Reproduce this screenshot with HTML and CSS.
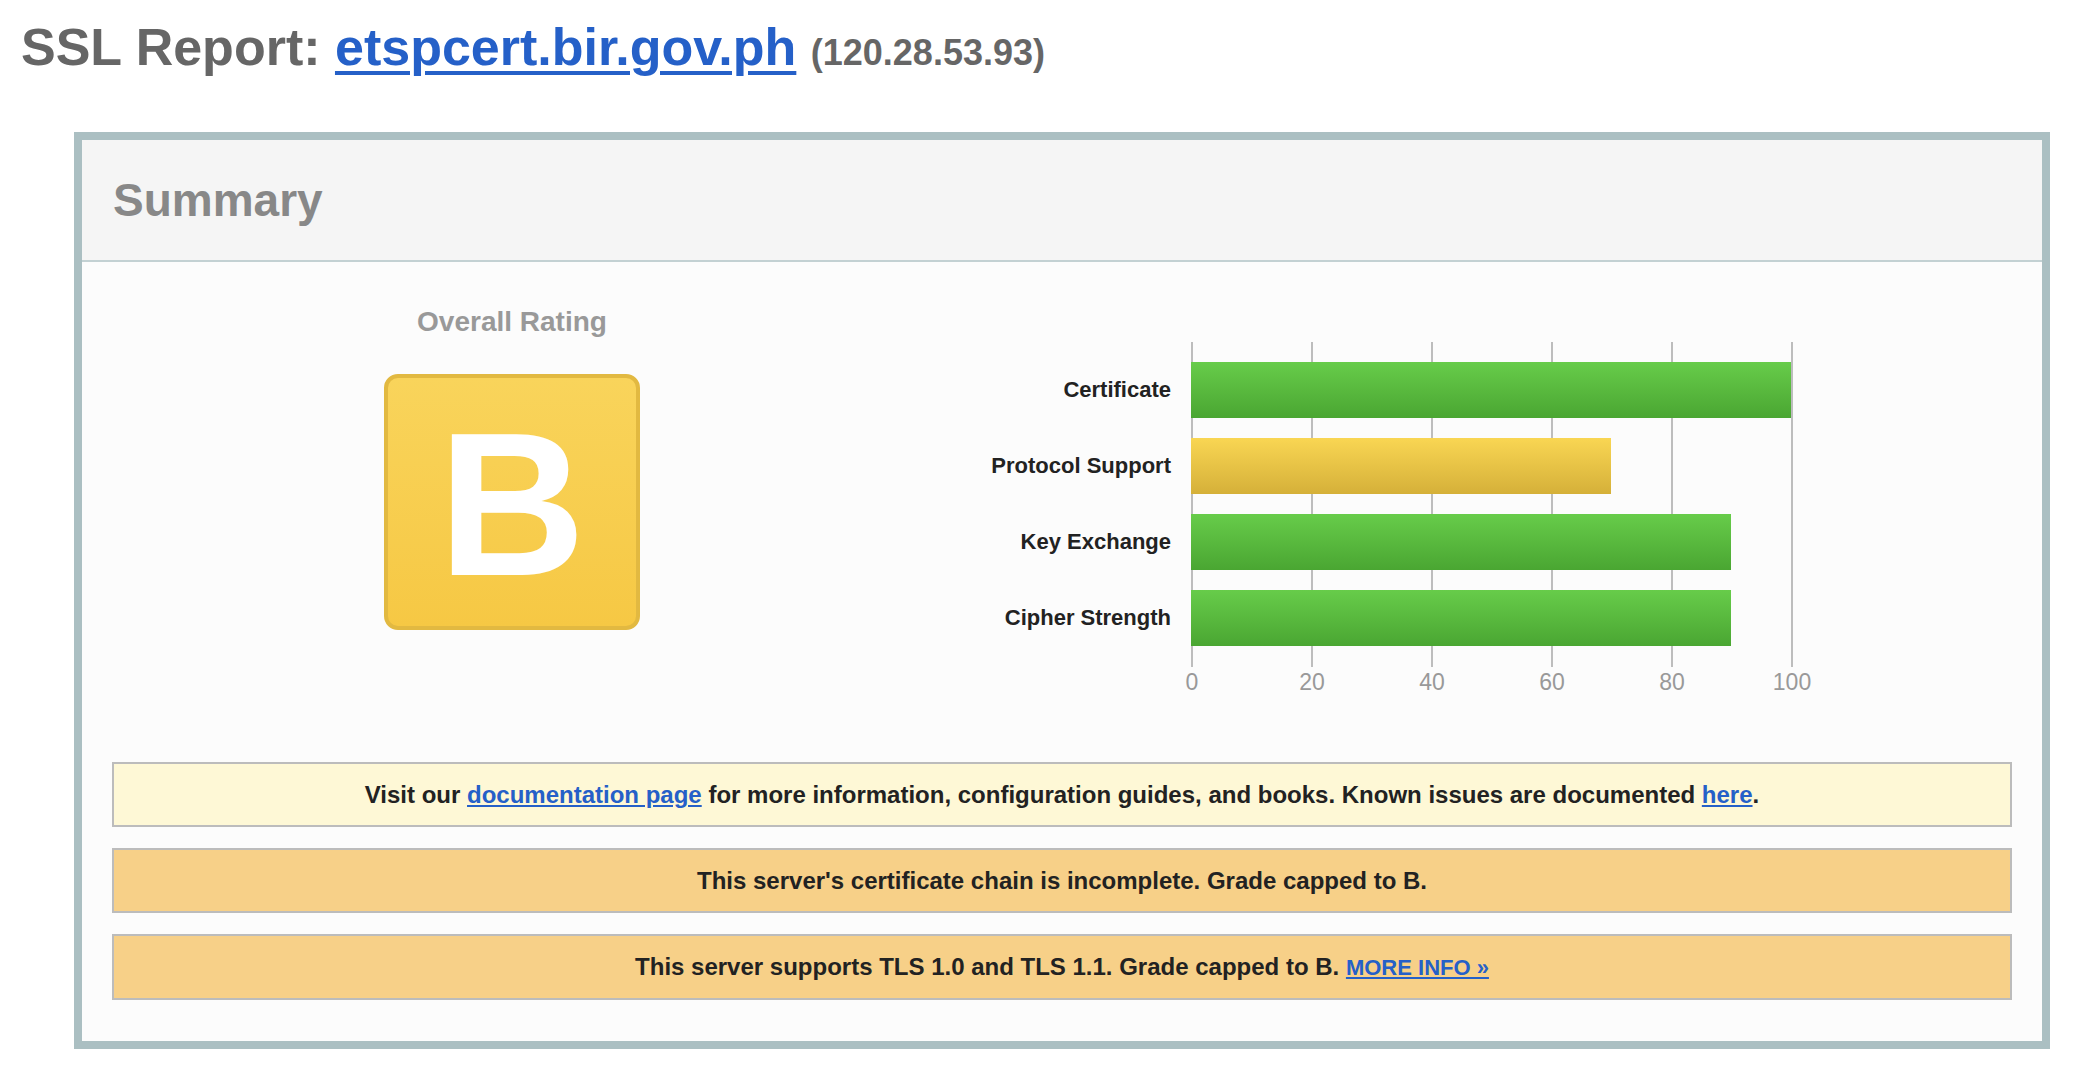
FILE: index.html
```html
<!DOCTYPE html>
<html>
<head>
<meta charset="utf-8">
<title>SSL Report</title>
<link rel="stylesheet" href="styles.css">
</head>
<body>
<div class="page">
  <h1 class="title">SSL Report: <a class="host" href="#">etspcert.bir.gov.ph</a> <span class="ip">(120.28.53.93)</span></h1>
  <div class="report">
    <div class="report-head"><h2 class="report-title">Summary</h2></div>
    <div class="report-body">
      <div class="summary-row">
        <div class="rating-col">
          <div class="rating-title">Overall Rating</div>
          <div class="grade">B</div>
        </div>
        <div class="chart">
          <div class="chart-main">
            <div class="chart-labels">
              <div class="chart-label">Certificate</div>
              <div class="chart-label">Protocol Support</div>
              <div class="chart-label">Key Exchange</div>
              <div class="chart-label">Cipher Strength</div>
            </div>
            <div class="plot">
              <div class="bar bar-green" style="width:600px"></div>
              <div class="bar bar-yellow" style="width:420px"></div>
              <div class="bar bar-green" style="width:540px"></div>
              <div class="bar bar-green" style="width:540px"></div>
            </div>
          </div>
          <div class="axis">
            <span class="tick">0</span>
            <span class="tick">20</span>
            <span class="tick">40</span>
            <span class="tick">60</span>
            <span class="tick">80</span>
            <span class="tick">100</span>
          </div>
        </div>
      </div>
      <div class="notices">
        <div class="notice notice-info">Visit our <a href="#">documentation page</a> for more information, configuration guides, and books. Known issues are documented <a href="#">here</a>.</div>
        <div class="notice notice-warn">This server's certificate chain is incomplete. Grade capped to B.</div>
        <div class="notice notice-warn">This server supports TLS 1.0 and TLS 1.1. Grade capped to B. <a class="more" href="#">MORE INFO »</a></div>
      </div>
    </div>
  </div>
</div>
</body>
</html>
```
FILE: styles.css
```css
html, body {
  margin: 0;
  padding: 0;
  background: #ffffff;
  font-family: "Liberation Sans", Arial, Helvetica, sans-serif;
}

.page {
  padding: 0 21px;
}

.title {
  margin: 18px 0 0 0;
  font-size: 52px;
  line-height: 58px;
  font-weight: bold;
  color: #666666;
  white-space: nowrap;
}

.host {
  color: #2560c8;
  text-decoration: underline;
  text-decoration-thickness: 4px;
  text-underline-offset: 6px;
}

.ip {
  font-size: 36px;
  color: #666666;
}

.report {
  box-sizing: border-box;
  width: 1976px;
  margin: 50px 0 0 53px;
  border: 8px solid #abbfc2;
  background: #fcfcfc;
}

.report-head {
  height: 120px;
  background: #f5f5f5;
  border-bottom: 2px solid #c3d1d3;
  display: flex;
  align-items: center;
  padding-left: 31px;
}

.report-title {
  margin: 0;
  font-size: 46px;
  font-weight: bold;
  color: #888888;
}

.report-body {
  padding: 44px 30px 41px 30px;
}

.summary-row {
  display: flex;
  align-items: flex-start;
}

.rating-col {
  width: 800px;
  display: flex;
  flex-direction: column;
  align-items: center;
}

.rating-title {
  font-size: 28px;
  line-height: 32px;
  font-weight: bold;
  color: #999999;
}

.grade {
  box-sizing: border-box;
  margin-top: 36px;
  width: 256px;
  height: 256px;
  border: 4px solid #e2b941;
  border-radius: 14px;
  background: linear-gradient(#f9d45b, #f6c844);
  color: #ffffff;
  font-size: 204px;
  font-weight: bold;
  display: flex;
  align-items: center;
  justify-content: center;
  line-height: 1;
  padding-top: 4px;
}

.chart {
  margin-top: 36px;
}

.chart-main {
  display: flex;
}

.chart-labels {
  width: 259px;
  margin-right: 20px;
  padding-top: 20px;
  display: flex;
  flex-direction: column;
  gap: 20px;
}

.chart-label {
  height: 56px;
  display: flex;
  align-items: center;
  justify-content: flex-end;
  font-size: 22px;
  font-weight: bold;
  color: #222222;
  white-space: nowrap;
}

.plot {
  width: 602px;
  padding: 20px 0 21px 0;
  display: flex;
  flex-direction: column;
  gap: 20px;
  background-image: repeating-linear-gradient(to right, #bdbdbd 0, #bdbdbd 2px, transparent 2px, transparent 120px);
}

.bar {
  height: 56px;
}

.bar-green {
  background: linear-gradient(#67cc4a, #4aa632);
}

.bar-yellow {
  background: linear-gradient(#f9d653, #d5b039);
}

.axis {
  display: flex;
  margin: 3px 0 0 220px;
}

.tick {
  width: 120px;
  text-align: center;
  font-size: 23px;
  line-height: 24px;
  color: #999999;
}

.notices {
  margin-top: 68px;
  display: flex;
  flex-direction: column;
  gap: 21px;
}

.notice {
  border: 2px solid #bcbcbc;
  padding: 17px 10px;
  line-height: 27px;
  font-size: 24px;
  font-weight: bold;
  color: #222222;
  text-align: center;
}

.notice a {
  color: #2560c8;
  text-decoration: underline;
}

.notice .more {
  font-size: 22px;
}

.notice-info {
  background: #fef8d6;
}

.notice-warn {
  background: #f7d088;
}
```
